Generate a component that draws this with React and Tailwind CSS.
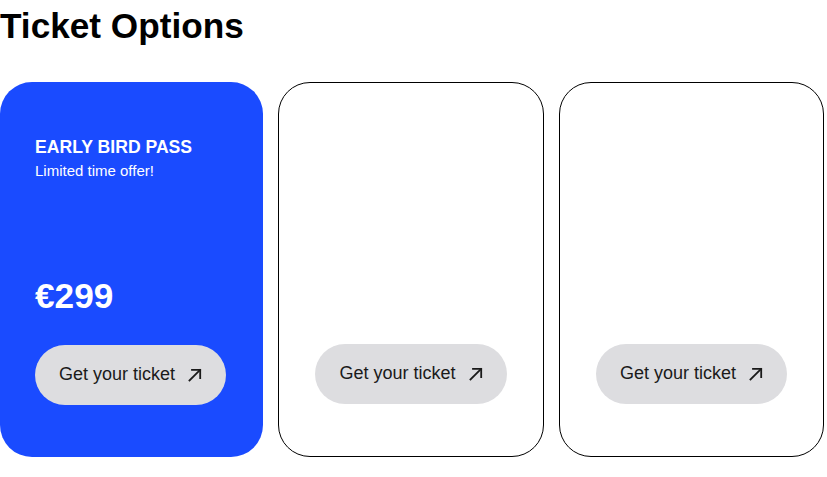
import React from "react";

function ArrowIcon() {
  return (
    <svg width="14" height="14" viewBox="0 0 14 14" fill="none" stroke="currentColor" strokeWidth="1.8" strokeLinecap="square">
      <path d="M1.5 12.5 L12 2" />
      <path d="M4 1.8 H12.2 V10" />
    </svg>
  );
}

function TicketButton() {
  return (
    <button className="flex h-[60px] items-center gap-[13px] rounded-full bg-[#dddde0] px-6 text-[18px] text-[#1a1a1a]">
      <span>Get your ticket</span>
      <ArrowIcon />
    </button>
  );
}

export default function App() {
  return (
    <div className="bg-white font-['Liberation_Sans',Arial,sans-serif] text-black">
      <h1 className="text-[35.2px] font-bold leading-normal">Ticket Options</h1>

      <div className="mt-[29px] grid grid-cols-[263px_266px_265px] gap-[15px]">
        <div className="flex h-[375px] flex-col items-start rounded-[32px] bg-[#1a4bff] px-[35px] pt-[52px] pb-[52px] text-white">
          <div>
            <h2 className="text-[17.6px] font-bold leading-normal">EARLY BIRD PASS</h2>
            <p className="text-[15px] leading-normal">Limited time offer!</p>
          </div>
          <div className="mt-auto text-[35.2px] font-bold leading-normal">€299</div>
          <div className="mt-[22px]">
            <TicketButton />
          </div>
        </div>

        <div className="flex h-[375px] flex-col items-center justify-end rounded-[32px] border border-black pb-[52px]">
          <TicketButton />
        </div>

        <div className="flex h-[375px] flex-col items-center justify-end rounded-[32px] border border-black pb-[52px]">
          <TicketButton />
        </div>
      </div>
    </div>
  );
}
